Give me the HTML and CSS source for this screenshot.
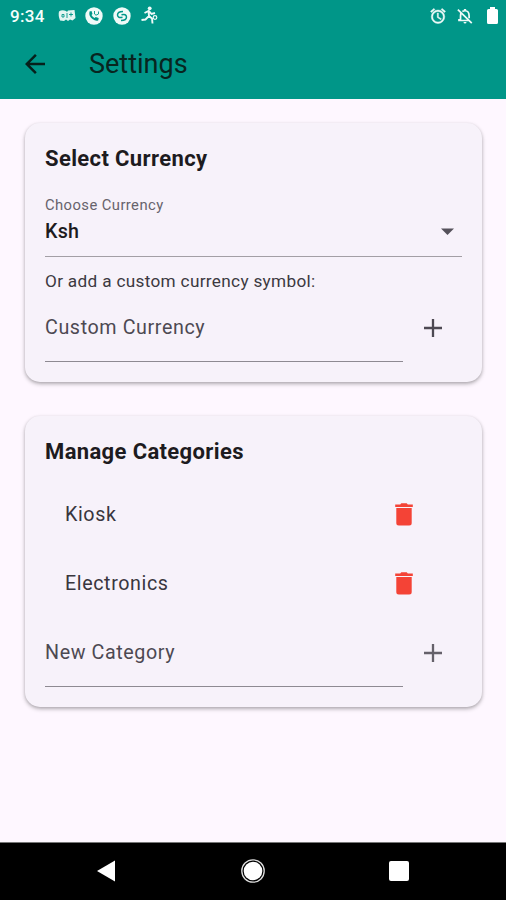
FILE: index.html
```html
<!DOCTYPE html>
<html lang="en">
<head>
<meta charset="utf-8">
<title>Settings</title>
<link rel="stylesheet" href="styles.css">
</head>
<body>
<div class="screen">
  <header class="top">
    <div class="status">
      <span class="clock">9:34</span>
      <svg class="s-game" width="18" height="14" viewBox="0 0 18 14"><path fill="#e4f5f2" d="M1 2.500Q4 .5 8 2l1 1 1-1.500 6.500-.5 1 8-3 2.500-2.500-1-2 1.500-2-1.500-2 1.500-4-.5Q0 6 1 2.500Z"/><path fill="none" stroke="#009688" stroke-width=".9" d="M4 5.500h2v2.500H4zM11 5.500h4M13 3.500v4M9 4v5"/></svg>
      <svg class="s-call" width="18" height="18" viewBox="0 0 18 18"><circle cx="9" cy="9" r="8.700" fill="#effaf8"/><path d="M4.500 4.500 6.500 4l1 3-1 1q1 2 3 3l1.200-1 3 1-.5 2.500Q10.500 14.500 7.500 12 3.500 9 4.500 4.500Z" fill="#009688"/><path d="M9.500 4v3l1.500 1.200L13.500 7V4.500" fill="none" stroke="#009688" stroke-width=".9"/></svg>
      <svg class="s-music" width="18" height="18" viewBox="0 0 18 18"><circle cx="9" cy="9" r="8.700" fill="#effaf8"/><path d="M10 4.500Q4.500 4.500 4.500 8q.3 3.500 5 2.200M8 13.500q5.500 0 5.500-3.500-.3-3.500-5-2.200" fill="none" stroke="#009688" stroke-width="1.500"/></svg>
      <svg class="s-run" width="17" height="19" viewBox="0 0 17 19"><circle cx="8.700" cy="2.300" r="1.900" fill="#effaf8"/><path d="M3.500 7 7.500 5 8 10 4.500 13.500.5 14M8 5 10.500 8 14 7M8 10 11 12.500 11.500 17.500" fill="none" stroke="#effaf8" stroke-width="1.900"/><circle cx="14" cy="11.500" r="1.800" fill="none" stroke="#effaf8" stroke-width="1.200"/></svg>
      <svg class="s-alarm" width="18" height="18" viewBox="0 0 24 24"><path fill="#effaf8" stroke="#effaf8" stroke-width=".6" d="m22 5.720-4.600-3.860-1.290 1.530 4.600 3.860zM7.880 3.390 6.600 1.860 2 5.710l1.290 1.530zM12.500 8H11v6l4.750 2.850.75-1.230-4-2.370zM12 4a9 9 0 1 0 0 18 9 9 0 0 0 0-18m0 16a7 7 0 1 1 0-14 7 7 0 0 1 0 14"/></svg>
      <svg class="s-bell" width="18" height="18" viewBox="0 0 24 24"><path fill="none" stroke="#effaf8" stroke-width="2.300" d="M6.500 8.500Q6 10 6 17H4v1h14M8.500 6Q10 5 12 5q5.500 0 5.500 7v3M2.500 3.500l18.500 18"/><path fill="#effaf8" d="M10.500 2.500h3V5h-3zM10 20h4q0 2-2 2t-2-2"/></svg>
      <svg class="s-battery" width="11" height="17" viewBox="0 0 11 17"><path fill="#fff" d="M3 0h5v2h1.500Q11 2 11 3.500v12Q11 17 9.500 17h-8Q0 17 0 15.500v-12Q0 2 1.500 2H3z"/></svg>
    </div>
    <div class="appbar">
      <svg class="back" width="30" height="30" viewBox="0 0 24 24"><path fill="#06201b" d="M20 11H7.830l5.590-5.590L12 4l-8 8 8 8 1.410-1.410L7.830 13H20z"/></svg>
      <h1>Settings</h1>
    </div>
  </header>
  <main>
    <section class="card">
      <h2>Select Currency</h2>
      <div class="select">
        <div class="label">Choose Currency</div>
        <div class="value"><span>Ksh</span><svg class="caret" width="13" height="7" viewBox="0 0 13 7"><path fill="#55515a" d="M0 .5h13L6.500 7z"/></svg></div>
      </div>
      <p class="hint">Or add a custom currency symbol:</p>
      <div class="entry">
        <div class="field">Custom Currency</div>
        <svg class="plus" width="18" height="18" viewBox="0 0 18 18"><path fill="none" stroke="#4d4952" stroke-width="2.300" d="M9 0v18M0 9h18"/></svg>
      </div>
    </section>
    <section class="card categories">
      <h2>Manage Categories</h2>
      <div class="item"><span>Kiosk</span><svg class="trash" width="18" height="23" viewBox="0 0 18 23"><path fill="#f44336" d="M1.300 5h15.400V20q0 2.500-2.500 2.500H3.800Q1.300 22.500 1.300 20zM.2 1.500h5L6.300.3h5.400l1.100 1.200h5V4H.2z"/></svg></div>
      <div class="item"><span>Electronics</span><svg class="trash" width="18" height="23" viewBox="0 0 18 23"><path fill="#f44336" d="M1.300 5h15.400V20q0 2.500-2.500 2.500H3.800Q1.300 22.500 1.300 20zM.2 1.500h5L6.300.3h5.400l1.100 1.200h5V4H.2z"/></svg></div>
      <div class="entry">
        <div class="field">New Category</div>
        <svg class="plus" width="18" height="18" viewBox="0 0 18 18"><path fill="none" stroke="#65616a" stroke-width="2.300" d="M9 0v18M0 9h18"/></svg>
      </div>
    </section>
  </main>
  <nav class="navbar">
    <svg class="n-back" width="18" height="22" viewBox="0 0 18 22"><path fill="#fff" d="M18 .5v21L0 11z"/></svg>
    <svg class="n-home" width="24" height="24" viewBox="0 0 24 24"><circle cx="12" cy="12" r="11.200" fill="none" stroke="#ddd" stroke-width="1.300"/><circle cx="12" cy="12" r="9.300" fill="#fff"/></svg>
    <span class="n-recent"></span>
  </nav>
</div>
</body>
</html>
```
FILE: styles.css
```css
* { box-sizing: border-box; }
body { margin: 0; font-family: Roboto, "Liberation Sans", sans-serif; color: #1d1b20; background: #fef7ff; }
svg { display: block; flex: none; }
h1, h2, p { margin: 0; }
.screen { width: 506px; height: 900px; display: flex; flex-direction: column; overflow: hidden; }
.top { height: 98.500px; background: #009688; flex: none; }
.status { height: 31px; display: flex; align-items: center; padding: 0 8px 0 10px; }
.clock { width: 48px; font-size: 17px; font-weight: 500; letter-spacing: .3px; color: #f4fffc; }
.s-call { margin-left: 9px; }
.s-music { margin-left: 10px; }
.s-run { margin-left: 10px; }
.s-alarm { margin-left: auto; }
.s-bell { margin-left: 9px; }
.s-battery { margin-left: 13px; }
.appbar { height: 66px; display: flex; align-items: center; padding-left: 20px; }
.appbar h1 { margin-left: 39px; font-size: 27px; font-weight: 400; line-height: 32px; color: #08251f; }
main { flex: 1; min-height: 0; padding: 24px 24px 0 25px; }
.card { height: 259px; padding: 21px 20px 0; border-radius: 15px; background: #f7f2fa; box-shadow: 0 2px 4px rgba(0,0,0,.27), 0 1px 3px rgba(0,0,0,.1); }
.categories { height: 291px; margin-top: 34px; }
h2 { height: 30px; font-size: 22px; line-height: 30px; font-weight: 700; letter-spacing: .37px; }
.select { height: 62px; margin-top: 21px; border-bottom: 1.500px solid #a39fa5; }
.label { height: 20px; line-height: 20px; font-size: 14.800px; letter-spacing: .42px; color: #67636c; }
.value { height: 34px; display: flex; align-items: center; justify-content: space-between; padding-right: 8px; font-size: 19.700px; font-weight: 500; letter-spacing: .2px; }
.hint { height: 24px; margin-top: 12px; margin-bottom: 1px; line-height: 24px; font-size: 17.200px; letter-spacing: .32px; color: #3c3941; }
.entry { height: 69px; display: flex; }
.field { width: 358px; height: 68px; padding-top: 20px; border-bottom: 1.300px solid #8e8a92; font-size: 19.700px; line-height: 28px; letter-spacing: .6px; color: #4d4952; }
.plus { margin: 25px 0 0 21px; }
.item { height: 69px; display: flex; align-items: center; justify-content: space-between; padding: 0 49.500px 0 20px; font-size: 19.700px; letter-spacing: .6px; color: #39363e; }
.categories .item:first-of-type { margin-top: 13px; }
.categories .entry { margin-top: 1px; }
.navbar { height: 58.500px; padding-bottom: 1.500px; background: #000; display: flex; align-items: center; border-top: 1px solid #777; flex: none; }
.n-back { margin-left: 97px; }
.n-home { margin-left: 126px; }
.n-recent { width: 20px; height: 20px; margin-left: 124px; border-radius: 2px; background: #fff; }
```
